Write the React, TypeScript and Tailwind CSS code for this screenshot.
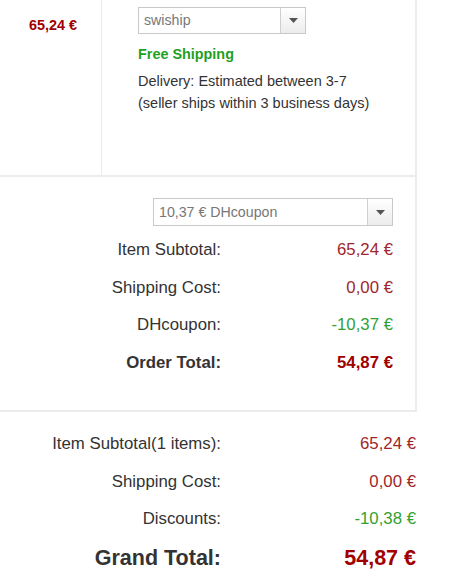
const font = { fontFamily: '"Liberation Sans", Arial, sans-serif' };

function SelectBox({ value, className }: { value: string; className: string }) {
  return (
    <div className={`flex items-stretch border border-[#c9c9c9] bg-white ${className}`}>
      <span className="flex-1 truncate pl-[5px] text-[14.2px] leading-none text-[#777] flex items-center">
        {value}
      </span>
      <span className="flex w-[25px] items-center justify-center border-l border-[#cfcfcf] bg-gradient-to-b from-white to-[#ececec]">
        <svg width="9" height="5" viewBox="0 0 9 5">
          <path d="M0 0 L9 0 L4.5 5 Z" fill="#555" />
        </svg>
      </span>
    </div>
  );
}

type Row = { label: string; value: string; tone: 'red' | 'green'; bold?: boolean };

function SummaryRows({ rows, valueRight }: { rows: Row[]; valueRight: string }) {
  return (
    <div className="flex flex-col">
      {rows.map((r) => (
        <div key={r.label} className="flex h-[37.6px] items-center text-[16.8px] leading-[37.6px]">
          <span className={`w-[221px] text-right text-[#333] ${r.bold ? 'font-bold' : ''}`}>{r.label}</span>
          <span
            className={`flex-1 text-right ${valueRight} ${r.bold ? 'font-bold' : ''} ${
              r.tone === 'green' ? 'text-[#33a033]' : r.bold ? 'text-[#a00000]' : 'text-[#a0262a]'
            }`}
          >
            {r.value}
          </span>
        </div>
      ))}
    </div>
  );
}

export default function App() {
  return (
    <div className="w-[475px] bg-white" style={font}>
      <div className="w-[417px] border-r-2 border-[#ececec]">
        {/* shipping row */}
        <div className="flex h-[177px] border-b-2 border-[#ececec]">
          <div className="w-[102px] border-r border-[#ececec] pl-[29px] pt-[13px]">
            <span className="text-[14.4px] font-bold leading-[20px] text-[#a00000]">65,24 €</span>
          </div>
          <div className="flex-1 pl-[36px] pt-[7px]">
            <SelectBox value="swiship" className="h-[27px] w-[168px]" />
            <div className="mt-[10px] text-[14.4px] font-bold leading-[20px] text-[#1f9f1f]">Free Shipping</div>
            <div className="mt-[7px] text-[14.5px] leading-[21.5px] text-[#333]">
              Delivery: Estimated between 3-7
              <br />
              (seller ships within 3 business days)
            </div>
          </div>
        </div>

        {/* coupon + order total */}
        <div className="h-[235px] border-b-2 border-[#ececec] pt-[21px]">
          <div className="flex justify-end pr-[22px]">
            <SelectBox value="10,37 € DHcoupon" className="h-[28px] w-[240px]" />
          </div>
          <div className="mt-[5px]">
            <SummaryRows
              valueRight="pr-[22px]"
              rows={[
                { label: 'Item Subtotal:', value: '65,24 €', tone: 'red' },
                { label: 'Shipping Cost:', value: '0,00 €', tone: 'red' },
                { label: 'DHcoupon:', value: '-10,37 €', tone: 'green' },
                { label: 'Order Total:', value: '54,87 €', tone: 'red', bold: true },
              ]}
            />
          </div>
        </div>
      </div>

      {/* grand totals */}
      <div className="w-[417px] pt-[13px]">
        <SummaryRows
          valueRight="pr-[1px]"
          rows={[
            { label: 'Item Subtotal(1 items):', value: '65,24 €', tone: 'red' },
            { label: 'Shipping Cost:', value: '0,00 €', tone: 'red' },
            { label: 'Discounts:', value: '-10,38 €', tone: 'green' },
          ]}
        />
        <div className="flex h-[40px] items-center text-[21.5px] font-bold leading-[40px]">
          <span className="w-[221px] text-right text-[#333]">Grand Total:</span>
          <span className="flex-1 pr-[1px] text-right text-[#a00000]">54,87 €</span>
        </div>
      </div>
    </div>
  );
}
